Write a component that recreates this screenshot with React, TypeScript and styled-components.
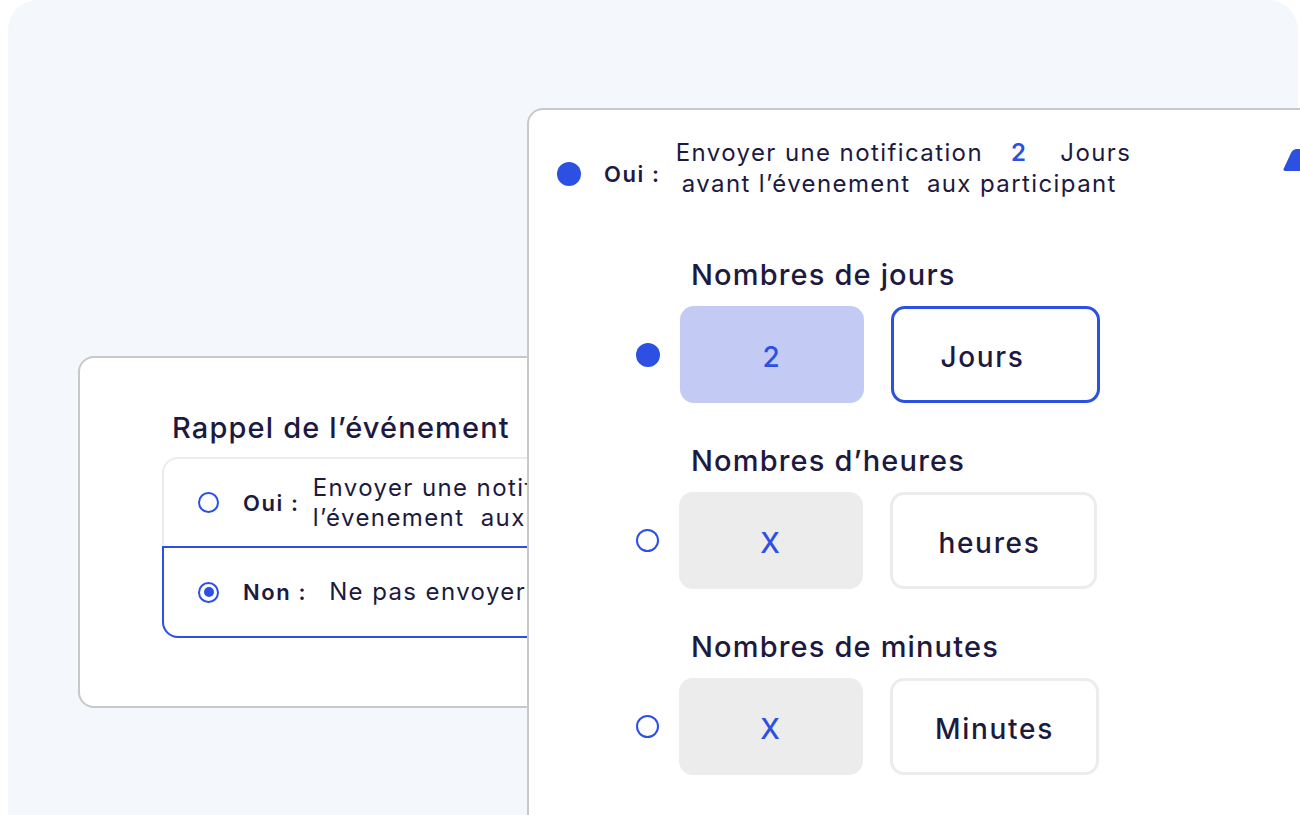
import React from 'react';
import styled, { createGlobalStyle } from 'styled-components';

const BLUE = '#2b50e2';
const INK = '#1d1a3f';

const GlobalStyle = createGlobalStyle`
  html, body {
    margin: 0;
    padding: 0;
    background: #ffffff;
    overflow: hidden;
  }
  body {
    font-family: Inter, 'Noto Sans', sans-serif;
    color: ${INK};
  }
`;

const Page = styled.div`
  width: 1300px;
  height: 815px;
  overflow: hidden;
  background: #ffffff;
`;

const Backdrop = styled.div`
  position: relative;
  margin-left: 8px;
  width: 1290px;
  height: 880px;
  border-radius: 30px;
  background: #f4f7fc;
`;

const Card = styled.div<{ $left: number; $top: number; $width: number; $height: number }>`
  position: absolute;
  left: ${(p) => p.$left}px;
  top: ${(p) => p.$top}px;
  width: ${(p) => p.$width}px;
  height: ${(p) => p.$height}px;
  box-sizing: border-box;
  background: #ffffff;
  border: 2px solid #c8c8c8;
  border-radius: 16px;
`;

const BackContent = styled.div`
  padding: 52px 0 0 82px;
`;

const Heading = styled.div<{ $indent?: number }>`
  font-size: 29px;
  font-weight: 500;
  line-height: 36px;
  letter-spacing: 0.04em;
  color: ${INK};
  margin-left: ${(p) => p.$indent ?? 0}px;
  white-space: nowrap;
`;

const OptionBox = styled.div`
  margin-top: 11px;
  width: 540px;
  border: 2px solid #ececec;
  border-radius: 16px;
`;

const OptionRow = styled.div<{ $selected?: boolean }>`
  display: flex;
  align-items: center;
  box-sizing: border-box;
  padding-left: 34px;
  height: ${(p) => (p.$selected ? 92 : 87)}px;
  margin: ${(p) => (p.$selected ? '0 -2px -2px -2px' : '0')};
  border: ${(p) => (p.$selected ? `2px solid ${BLUE}` : 'none')};
  border-radius: ${(p) => (p.$selected ? '0 0 16px 16px' : '0')};
  white-space: nowrap;
`;

const Ring = styled.span<{ $size: number; $checked?: boolean }>`
  flex: none;
  display: inline-flex;
  align-items: center;
  justify-content: center;
  box-sizing: border-box;
  width: ${(p) => p.$size}px;
  height: ${(p) => p.$size}px;
  border: 2.6px solid ${BLUE};
  border-radius: 50%;

  &::after {
    content: '';
    display: ${(p) => (p.$checked ? 'block' : 'none')};
    width: 10px;
    height: 10px;
    border-radius: 50%;
    background: ${BLUE};
  }
`;

const Dot = styled.span<{ $size: number }>`
  flex: none;
  display: inline-block;
  width: ${(p) => p.$size}px;
  height: ${(p) => p.$size}px;
  border-radius: 50%;
  background: ${BLUE};
`;

const Label = styled.span<{ $gap: number; $after: number }>`
  font-size: 22px;
  font-weight: 600;
  letter-spacing: 1.6px;
  color: ${INK};
  margin-left: ${(p) => p.$gap}px;
  margin-right: ${(p) => p.$after}px;
`;

const Copy = styled.div<{ $line: number }>`
  font-size: 24px;
  line-height: ${(p) => p.$line}px;
  letter-spacing: 1.4px;
  color: ${INK};
  white-space: nowrap;
`;

const Lift = styled(Copy)`
  margin-bottom: 11px;
`;

const Accent = styled.span<{ $gapL: number; $gapR: number }>`
  font-weight: 600;
  color: ${BLUE};
  margin: 0 ${(p) => p.$gapR}px 0 ${(p) => p.$gapL}px;
`;

const SecondLine = styled.span<{ $indent?: number }>`
  display: block;
  padding-left: ${(p) => p.$indent ?? 0}px;
`;

const FrontContent = styled.div`
  padding: 27px 0 0 28px;
`;

const Header = styled.div`
  display: flex;
  align-items: center;
`;

const Sections = styled.div`
  margin: 47px 0 0 79px;
  display: flex;
  flex-direction: column;
  gap: 40px;
`;

const Section = styled.div`
  display: flex;
  flex-direction: column;
  gap: 13px;
`;

const FieldRow = styled.div`
  display: flex;
  align-items: center;
`;

const Fields = styled.div`
  display: flex;
  gap: 27px;
  margin-left: 20px;
`;

const Field = styled.div<{
  $tone: 'active' | 'muted' | 'outline' | 'plain';
  $width: number;
  $nudge?: number;
}>`
  box-sizing: border-box;
  width: ${(p) => p.$width}px;
  height: 97px;
  padding: 4px ${(p) => p.$nudge ?? 0}px 0 0;
  border-radius: 14px;
  display: flex;
  align-items: center;
  justify-content: center;
  font-size: 28px;
  font-weight: 500;
  letter-spacing: 0.06em;
  color: ${(p) => (p.$tone === 'active' || p.$tone === 'muted' ? BLUE : INK)};
  background: ${(p) =>
    p.$tone === 'active' ? '#c3cbf5' : p.$tone === 'muted' ? '#ececec' : '#ffffff'};
  border: ${(p) =>
    p.$tone === 'outline'
      ? `3px solid ${BLUE}`
      : p.$tone === 'plain'
        ? '3px solid #ececec'
        : 'none'};
`;

const Peek = styled.svg`
  position: absolute;
  left: 752px;
  top: 38px;
`;

const sections = [
  { title: 'Nombres de jours', value: '2', unit: 'Jours', on: true, unitW: 209, nudge: 26 },
  { title: 'Nombres d’heures', value: 'X', unit: 'heures', on: false, unitW: 207, nudge: 8 },
  { title: 'Nombres de minutes', value: 'X', unit: 'Minutes', on: false, unitW: 209, nudge: 0 },
];

export default function App() {
  return (
    <Page>
      <GlobalStyle />
      <Backdrop>
        <Card $left={70} $top={356} $width={620} $height={352}>
          <BackContent>
            <Heading $indent={10}>Rappel de l’événement</Heading>
            <OptionBox>
              <OptionRow>
                <Ring $size={21} />
                <Label $gap={24} $after={13}>Oui :</Label>
                <Copy $line={30}>
                  Envoyer une notification 2 Jours avant
                  <SecondLine>l’évenement&nbsp; aux participant</SecondLine>
                </Copy>
              </OptionRow>
              <OptionRow $selected>
                <Ring $size={21} $checked />
                <Label $gap={24} $after={22}>Non :</Label>
                <Copy $line={30}>Ne pas envoyer de notification</Copy>
              </OptionRow>
            </OptionBox>
          </BackContent>
        </Card>

        <Card $left={519} $top={108} $width={830} $height={760}>
          <FrontContent>
            <Header>
              <Dot $size={24} />
              <Label $gap={23} $after={15}>Oui :</Label>
              <Lift $line={31}>
                Envoyer une notification
                <Accent $gapL={28} $gapR={33}>2</Accent>
                Jours
                <SecondLine $indent={6}>avant l’évenement&nbsp; aux participant</SecondLine>
              </Lift>
            </Header>
            <Sections>
              {sections.map((s) => (
                <Section key={s.title}>
                  <Heading $indent={55}>{s.title}</Heading>
                  <FieldRow>
                    {s.on ? <Dot $size={24} /> : <Ring $size={23} />}
                    <Fields>
                      <Field $tone={s.on ? 'active' : 'muted'} $width={184}>
                        {s.value}
                      </Field>
                      <Field $tone={s.on ? 'outline' : 'plain'} $width={s.unitW} $nudge={s.nudge}>
                        {s.unit}
                      </Field>
                    </Fields>
                  </FieldRow>
                </Section>
              ))}
            </Sections>
          </FrontContent>
          <Peek width="30" height="26" viewBox="0 0 30 26">
            <path d="M3 20 L10 5 Q12 1 16 1 L30 1 L30 23 L6 23 Q1 23 3 20 Z" fill={BLUE} />
          </Peek>
        </Card>
      </Backdrop>
    </Page>
  );
}
